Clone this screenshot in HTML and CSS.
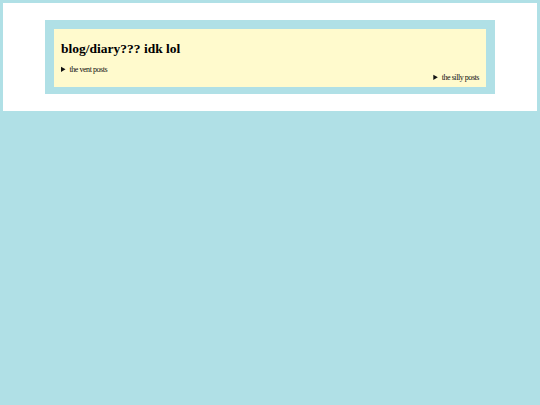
FILE: index.html
```html
<!DOCTYPE html>
<html lang="en">
<head>
<meta charset="utf-8">
<title>blog/diary??? idk lol</title>
<link rel="stylesheet" href="styles.css">
</head>
<body>
  <main class="page">
    <section class="panel">
      <h1 class="title">blog/diary??? idk lol</h1>
      <details class="posts">
        <summary>the vent posts</summary>
      </details>
      <details class="posts posts-right">
        <summary>the silly posts</summary>
      </details>
    </section>
  </main>
</body>
</html>
```
FILE: styles.css
```css
html {
  background: #b0e0e6;
}

body {
  margin: 3px;
  font-family: "Liberation Serif", "Times New Roman", serif;
  color: #000;
}

.page {
  background: #fff;
  padding: 17px 42px;
}

.panel {
  background: #fffacd;
  border: 9px solid #b0e0e6;
  border-bottom-width: 7px;
  padding: 6px 7px 5px 7px;
  display: flex;
  flex-direction: column;
}

.title {
  font-size: 13.5px;
  font-weight: bold;
  line-height: 16px;
  margin: 6px 0 9px 0;
}

.posts {
  font-size: 8px;
  line-height: 8px;
  letter-spacing: -0.45px;
  color: #111;
}

.posts summary {
  cursor: pointer;
}

.posts-right {
  align-self: flex-end;
}
```
